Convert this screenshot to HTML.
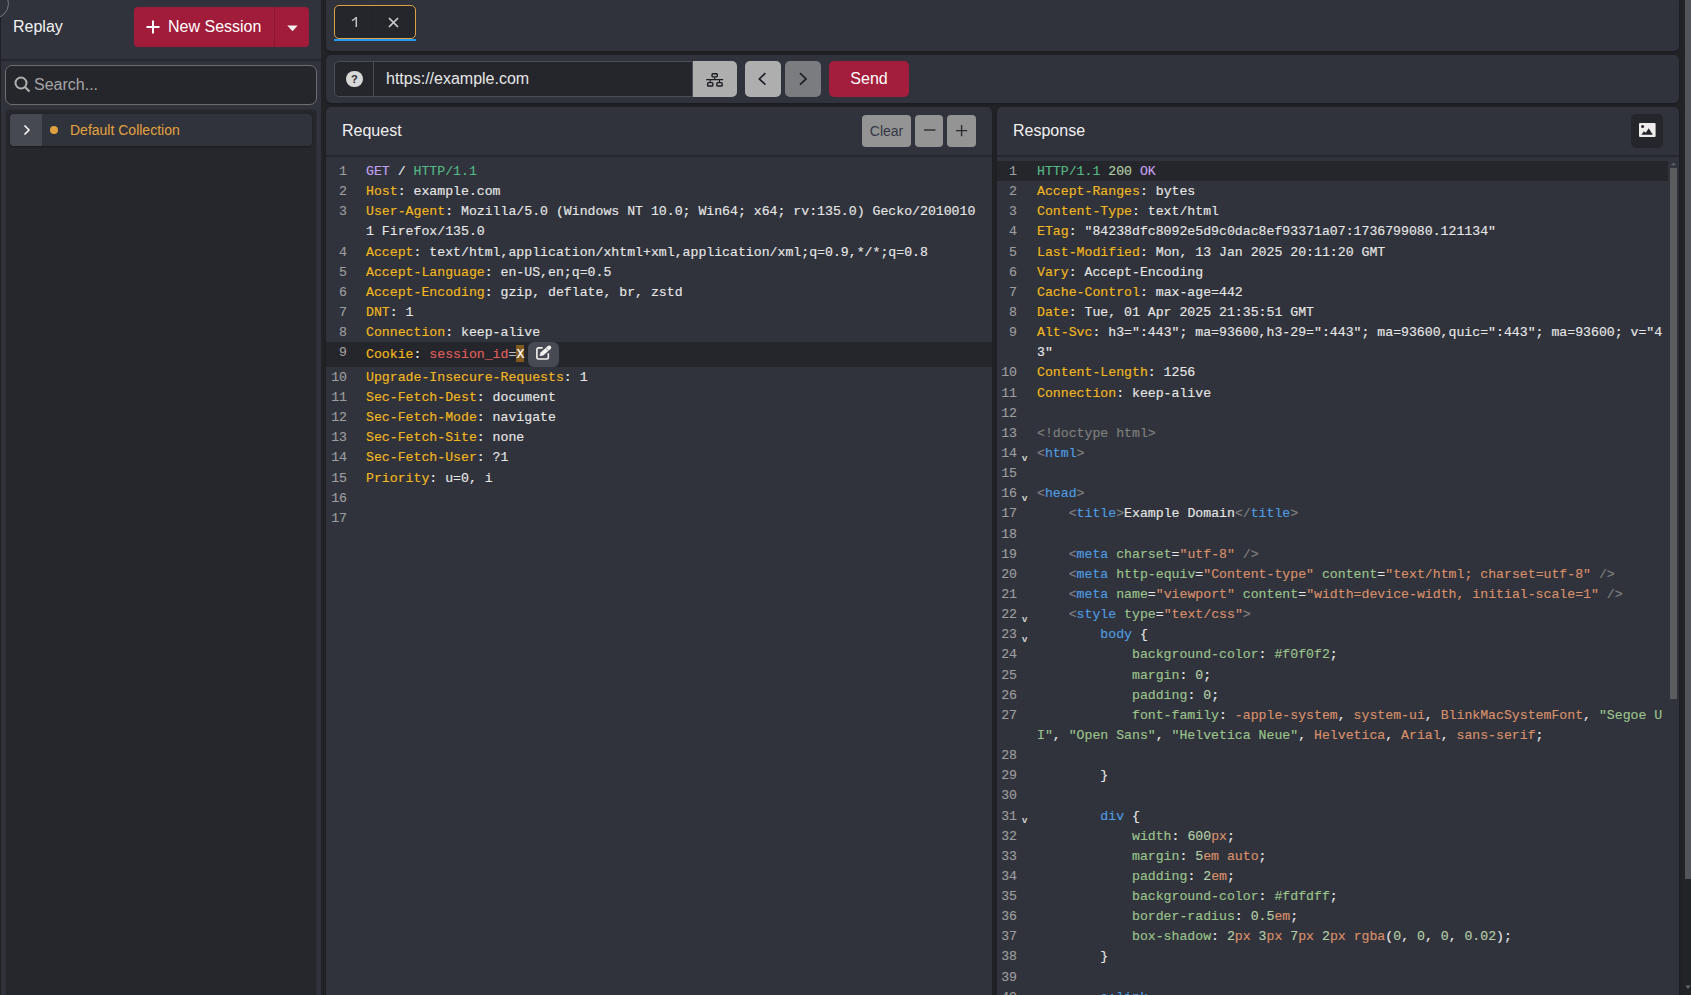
<!DOCTYPE html>
<html><head><meta charset="utf-8">
<style>
*{box-sizing:border-box;margin:0;padding:0}
html,body{width:1691px;height:995px;overflow:hidden;background:#222327;font-family:"Liberation Sans",sans-serif;color:#e6e6e6}
.abs{position:absolute}
#side{position:absolute;left:0;top:0;width:321px;height:995px;background:#30333c}
#side .strip{position:absolute;left:0;top:17px;width:1px;bottom:0;background:#1f2024}
#side .arc{position:absolute;left:-22px;top:-12px;width:31px;height:31px;border-radius:50%;border:1px solid #7a7b80}
#side .hsep{position:absolute;left:1px;top:59px;width:320px;height:2px;background:#26282d}
.title{position:absolute;left:13px;top:18px;font-size:16px;color:#f2f2f2}
#newbtn{position:absolute;left:134px;top:7px;width:175px;height:40px;background:#a11c3b;border-radius:4px}
#newbtn .div{position:absolute;left:140px;top:0;width:1px;height:40px;background:#8a1631}
#newbtn .txt{position:absolute;left:34px;top:11px;font-size:16px;color:#fff}
#search{position:absolute;left:5px;top:65px;width:312px;height:40px;border:1px solid #6e6e70;border-radius:7px;background:#25262b}
#search .ph{position:absolute;left:28px;top:10px;font-size:16px;color:#a5a5a8}
#coll{position:absolute;left:5px;top:109px;width:312px;height:890px;background:#26272c;border-radius:4px;border:1px solid #2c2e34}
#row{position:absolute;left:10px;top:114px;width:302px;height:32px;background:#30333c;border-radius:4px;box-shadow:0 1px 2px rgba(0,0,0,.35);overflow:hidden}
#row .chev{position:absolute;left:0;top:0;width:32px;height:32px;background:#464952}
#row .dot{position:absolute;left:40px;top:12px;width:8px;height:8px;border-radius:50%;background:#e0a040}
#row .name{position:absolute;left:60px;top:8px;font-size:14px;color:#e4a33f}

.panel{position:absolute;background:#30333c;border-radius:5px;box-shadow:0 1px 3px rgba(0,0,0,.3)}
#tabs{left:326px;top:0;width:1353px;height:51px;border-radius:0 0 5px 5px}
#tab1{position:absolute;left:8px;top:5px;width:82px;height:34px;border:1px solid #dca244;border-radius:5px;background:#25262b}
#tab1 .n{position:absolute;left:16px;top:8px;font-size:14px;color:#b8b8b8}
#tab1 .sep{position:absolute;left:40px;top:0;width:1px;height:32px;background:#27282d}
#tabul{position:absolute;left:8px;top:39px;width:82px;height:2px;background:#2299f2}
#urlbar{left:326px;top:55px;width:1353px;height:48px}
#urlin{position:absolute;left:8px;top:6px;width:359px;height:36px;border:1px solid #4b4e56;border-radius:5px 0 0 5px;background:#25262b}
#urlin .q{position:absolute;left:11.2px;top:8.8px;width:16.5px;height:16.5px;border-radius:50%;background:#d8d8d8;color:#2a2b30;font-size:11px;font-weight:bold;text-align:center;line-height:17px}
#urlin .sep{position:absolute;left:38px;top:0;width:1px;height:34px;background:#4b4e56}
#urlin .u{position:absolute;left:51px;top:8px;font-size:16px;color:#e8e8e8}
.gbtn{position:absolute;top:6px;height:36px;background:#aeaeae;border-radius:5px}
#send{position:absolute;left:503px;top:6px;width:80px;height:36px;background:#a31d3c;border-radius:5px;color:#fff;font-size:16px;text-align:center;line-height:36px}

#req{left:326px;top:107px;width:666px;height:900px}
#res{left:997px;top:107px;width:682px;height:900px}
.ph{position:absolute;left:0;top:0;width:100%;height:48px}
.ph .t{position:absolute;left:16px;top:15px;font-size:16px;color:#f0f0f0}
.psep{position:absolute;left:0;top:48px;width:100%;height:2px;background:#26282d}
.sbtn{position:absolute;top:8px;height:32px;background:#949494;border-radius:4px;color:#353845;font-size:14px;text-align:center;line-height:33px}

.code{position:absolute;left:0;top:54px;width:100%;font-family:"Liberation Mono",monospace;font-size:13.2px;-webkit-text-stroke:0.15px currentColor}
.r .c{white-space:pre}
.r.ck{height:24.6px}
.r.ck .c{top:2.6px}
.edit{position:absolute;left:202px;top:0;width:30.5px;height:24.6px;background:#474a53;border-radius:6px}
.edit svg{position:absolute;left:7px;top:2px}
.eq{color:#bdbdbd}
.xv{color:#fff;background:#7f5a1c;padding:2px 0 0.5px}
.r{position:relative;height:20.15px;line-height:20.15px}
.r .g{position:absolute;left:0;top:1px;width:21px;text-align:right;color:#9d9d9f}
.r .c{position:absolute;left:40px;top:1px;color:#e6e6e6}
.hl{background:#25262b}
#res .hl{width:671px}
#res .r .g{width:20px}
.k{color:#f4b81c}
.m{color:#c6a0f0}
.p{color:#55b985}
.s{color:#e05d5d}
.tb{color:#808080}
.tn{color:#4f9ce0}
.an{color:#9cc38c}
.sv{color:#d9906a}
.nu{color:#b5cea8}
.fold{position:absolute;left:25px;top:4.6px;font-family:"Liberation Sans",sans-serif;font-size:9.6px;font-weight:bold;color:#cfcfcf;-webkit-text-stroke:0}
#outsb{position:absolute;left:1685px;top:0;width:6px;height:879px;background:#535459}
</style></head>
<body>
<div id="side">
  <div class="arc"></div>
  <div class="strip"></div>
  <div class="title">Replay</div>
  <div id="newbtn">
    <svg class="abs" style="left:11px;top:11.5px" width="16" height="16" viewBox="0 0 16 16"><path d="M8 1.5v13M1.5 8h13" stroke="#fff" stroke-width="2"/></svg>
    <div class="txt">New Session</div>
    <div class="div"></div>
    <svg class="abs" style="left:153px;top:18px" width="11" height="7" viewBox="0 0 11 7"><path d="M0.3 0.5h10.4L5.5 6.3z" fill="#f0f0f0"/></svg>
  </div>
  <div class="hsep"></div>
  <div id="search">
    <svg class="abs" style="left:8px;top:10px" width="17" height="17" viewBox="0 0 17 17"><circle cx="7" cy="7" r="5.5" stroke="#b0b0b0" stroke-width="2" fill="none"/><path d="M11 11l4.5 4.5" stroke="#b0b0b0" stroke-width="2.2"/></svg>
    <div class="ph">Search...</div>
  </div>
  <div id="coll"></div>
  <div id="row">
    <div class="chev"><svg class="abs" style="left:13px;top:10px" width="8" height="12" viewBox="0 0 8 12"><path d="M1.5 1.5l4.5 4.5-4.5 4.5" stroke="#fff" stroke-width="1.5" fill="none"/></svg></div>
    <div class="dot"></div>
    <div class="name">Default Collection</div>
  </div>
</div>

<div id="tabs" class="panel">
  <div id="tab1"><svg class="abs" style="left:0;top:0" width="40" height="32"><path d="M21.3 11v10.1" stroke="#c4c4c4" stroke-width="1.5"/><path d="M21 11.4C20 13 18.6 14 16.9 14.6" stroke="#c4c4c4" stroke-width="1.2" fill="none"/></svg><div class="sep"></div>
    <svg class="abs" style="left:52.5px;top:10.5px" width="11" height="11" viewBox="0 0 11 11"><path d="M1 1l9 9M10 1l-9 9" stroke="#cfcfcf" stroke-width="1.7"/></svg>
  </div>
  <div id="tabul"></div>
</div>

<div id="urlbar" class="panel">
  <div id="urlin"><div class="q">?</div><div class="sep"></div><div class="u">https://example.com</div></div>
  <div class="gbtn" style="left:367px;width:44px;border-radius:0 5px 5px 0">
    <svg class="abs" style="left:13px;top:11px" width="18" height="16" viewBox="0 0 18 16"><rect x="6.05" y="1.75" width="5.2" height="3.1" rx="0.8" stroke="#1a1c22" stroke-width="1.4" fill="none"/><rect x="1.65" y="10.65" width="5.2" height="3.3" rx="0.8" stroke="#1a1c22" stroke-width="1.4" fill="none"/><rect x="10.85" y="10.65" width="5.3" height="3.3" rx="0.8" stroke="#1a1c22" stroke-width="1.4" fill="none"/><path d="M0.2 7.6h17M8.65 5.3v2.3M4.25 7.6v2.4M13.5 7.6v2.4" stroke="#1a1c22" stroke-width="1.1" fill="none"/></svg>
  </div>
  <div class="gbtn" style="left:419px;width:36px">
    <svg class="abs" style="left:0;top:0" width="36" height="36"><path d="M20.4 12.1L14.3 17.9 20.4 23.7" stroke="#1c1a24" stroke-width="1.6" fill="none"/></svg>
  </div>
  <div class="gbtn" style="left:459px;width:36px;background:#7b7c80">
    <svg class="abs" style="left:0;top:0" width="36" height="36"><path d="M15 12.1L21.1 17.9 15 23.7" stroke="#1c1a24" stroke-width="1.6" fill="none"/></svg>
  </div>
  <div id="send">Send</div>
</div>

<div id="req" class="panel">
  <div class="ph"><div class="t">Request</div>
    <div class="sbtn" style="left:536px;width:49px">Clear</div>
    <div class="sbtn" style="left:589px;width:28px"><svg class="abs" style="left:8.5px;top:14.4px" width="12" height="2"><path d="M0 1h11.5" stroke="#2a2b30" stroke-width="1.4"/></svg></div>
    <div class="sbtn" style="left:621px;width:29px"><svg class="abs" style="left:9px;top:10px" width="12" height="12"><path d="M0 5.6h11.2M5.6 0v11.2" stroke="#2a2b30" stroke-width="1.4"/></svg></div>
  </div>
  <div class="psep"></div>
  <div class="code" id="reqcode"><div class="r"><span class="g">1</span><span class="c"><span class="m">GET</span> / <span class="p">HTTP/1.1</span></span></div>
<div class="r"><span class="g">2</span><span class="c"><span class="k">Host</span>: example.com</span></div>
<div class="r"><span class="g">3</span><span class="c"><span class="k">User-Agent</span>: Mozilla/5.0 (Windows NT 10.0; Win64; x64; rv:135.0) Gecko/2010010</span></div>
<div class="r"><span class="g"></span><span class="c">1 Firefox/135.0</span></div>
<div class="r"><span class="g">4</span><span class="c"><span class="k">Accept</span>: text/html,application/xhtml+xml,application/xml;q=0.9,*/*;q=0.8</span></div>
<div class="r"><span class="g">5</span><span class="c"><span class="k">Accept-Language</span>: en-US,en;q=0.5</span></div>
<div class="r"><span class="g">6</span><span class="c"><span class="k">Accept-Encoding</span>: gzip, deflate, br, zstd</span></div>
<div class="r"><span class="g">7</span><span class="c"><span class="k">DNT</span>: 1</span></div>
<div class="r"><span class="g">8</span><span class="c"><span class="k">Connection</span>: keep-alive</span></div>
<div class="r hl ck"><span class="g">9</span><span class="c"><span class="k">Cookie</span>: <span class="s">session_id</span><span class="eq">=</span><span class="xv">X</span></span><div class="edit"><svg width="18" height="17" viewBox="0 0 18 17"><path d="M7.6 3.85H3.6a1.7 1.7 0 0 0-1.7 1.7v7.7a1.7 1.7 0 0 0 1.7 1.7h8.05a1.7 1.7 0 0 0 1.7-1.7V9.2" stroke="#f4f2f0" stroke-width="1.6" fill="none"/><path d="M4.5 12.1L8.22 11.49 15.57 5.02 12.93 2.02 5.58 8.49z" fill="#f4f2f0"/><circle cx="14.25" cy="3.52" r="2" fill="#f4f2f0"/><path d="M11.3 4.5l2.1 2.3" stroke="#474a53" stroke-width="0.6"/></svg></div></div>
<div class="r"><span class="g">10</span><span class="c"><span class="k">Upgrade-Insecure-Requests</span>: 1</span></div>
<div class="r"><span class="g">11</span><span class="c"><span class="k">Sec-Fetch-Dest</span>: document</span></div>
<div class="r"><span class="g">12</span><span class="c"><span class="k">Sec-Fetch-Mode</span>: navigate</span></div>
<div class="r"><span class="g">13</span><span class="c"><span class="k">Sec-Fetch-Site</span>: none</span></div>
<div class="r"><span class="g">14</span><span class="c"><span class="k">Sec-Fetch-User</span>: ?1</span></div>
<div class="r"><span class="g">15</span><span class="c"><span class="k">Priority</span>: u=0, i</span></div>
<div class="r"><span class="g">16</span><span class="c"></span></div>
<div class="r"><span class="g">17</span><span class="c"></span></div></div>
</div>

<div id="res" class="panel">
  <div class="ph"><div class="t">Response</div>
    <div class="abs" style="left:634px;top:7px;width:32px;height:34px;background:#25262b;border-radius:5px">
      <svg class="abs" style="left:7.8px;top:8.9px" width="17" height="15" viewBox="0 0 17 15"><rect x="0" y="0" width="16.6" height="14.1" rx="1" fill="#efedeb"/><circle cx="3.6" cy="3.4" r="1.5" fill="#25262b"/><path d="M2.4 11.7L4.9 8.3 6.8 9.8 9.7 5.2 13.8 11.7z" fill="#25262b"/></svg>
    </div>
  </div>
  <div class="psep"></div>
  <div class="code" id="rescode"><div class="r hl"><span class="g">1</span><span class="c"><span class="p">HTTP/1.1</span> <span class="nu">200</span> <span class="m">OK</span></span></div>
<div class="r"><span class="g">2</span><span class="c"><span class="k">Accept-Ranges</span>: bytes</span></div>
<div class="r"><span class="g">3</span><span class="c"><span class="k">Content-Type</span>: text/html</span></div>
<div class="r"><span class="g">4</span><span class="c"><span class="k">ETag</span>: "84238dfc8092e5d9c0dac8ef93371a07:1736799080.121134"</span></div>
<div class="r"><span class="g">5</span><span class="c"><span class="k">Last-Modified</span>: Mon, 13 Jan 2025 20:11:20 GMT</span></div>
<div class="r"><span class="g">6</span><span class="c"><span class="k">Vary</span>: Accept-Encoding</span></div>
<div class="r"><span class="g">7</span><span class="c"><span class="k">Cache-Control</span>: max-age=442</span></div>
<div class="r"><span class="g">8</span><span class="c"><span class="k">Date</span>: Tue, 01 Apr 2025 21:35:51 GMT</span></div>
<div class="r"><span class="g">9</span><span class="c"><span class="k">Alt-Svc</span>: h3=":443"; ma=93600,h3-29=":443"; ma=93600,quic=":443"; ma=93600; v="4</span></div>
<div class="r"><span class="g"></span><span class="c">3"</span></div>
<div class="r"><span class="g">10</span><span class="c"><span class="k">Content-Length</span>: 1256</span></div>
<div class="r"><span class="g">11</span><span class="c"><span class="k">Connection</span>: keep-alive</span></div>
<div class="r"><span class="g">12</span><span class="c"></span></div>
<div class="r"><span class="g">13</span><span class="c"><span class="tb">&lt;!doctype html&gt;</span></span></div>
<div class="r"><span class="g">14</span><span class="fold">v</span><span class="c"><span class="tb">&lt;</span><span class="tn">html</span><span class="tb">&gt;</span></span></div>
<div class="r"><span class="g">15</span><span class="c"></span></div>
<div class="r"><span class="g">16</span><span class="fold">v</span><span class="c"><span class="tb">&lt;</span><span class="tn">head</span><span class="tb">&gt;</span></span></div>
<div class="r"><span class="g">17</span><span class="c">    <span class="tb">&lt;</span><span class="tn">title</span><span class="tb">&gt;</span>Example Domain<span class="tb">&lt;/</span><span class="tn">title</span><span class="tb">&gt;</span></span></div>
<div class="r"><span class="g">18</span><span class="c"></span></div>
<div class="r"><span class="g">19</span><span class="c">    <span class="tb">&lt;</span><span class="tn">meta</span> <span class="an">charset</span>=<span class="sv">"utf-8"</span><span class="tb"> /&gt;</span></span></div>
<div class="r"><span class="g">20</span><span class="c">    <span class="tb">&lt;</span><span class="tn">meta</span> <span class="an">http-equiv</span>=<span class="sv">"Content-type"</span> <span class="an">content</span>=<span class="sv">"text/html; charset=utf-8"</span><span class="tb"> /&gt;</span></span></div>
<div class="r"><span class="g">21</span><span class="c">    <span class="tb">&lt;</span><span class="tn">meta</span> <span class="an">name</span>=<span class="sv">"viewport"</span> <span class="an">content</span>=<span class="sv">"width=device-width, initial-scale=1"</span><span class="tb"> /&gt;</span></span></div>
<div class="r"><span class="g">22</span><span class="fold">v</span><span class="c">    <span class="tb">&lt;</span><span class="tn">style</span> <span class="an">type</span>=<span class="sv">"text/css"</span><span class="tb">&gt;</span></span></div>
<div class="r"><span class="g">23</span><span class="fold">v</span><span class="c">        <span class="tn">body</span> {</span></div>
<div class="r"><span class="g">24</span><span class="c">            <span class="an">background-color</span>: <span class="an">#f0f0f2</span>;</span></div>
<div class="r"><span class="g">25</span><span class="c">            <span class="an">margin</span>: <span class="nu">0</span>;</span></div>
<div class="r"><span class="g">26</span><span class="c">            <span class="an">padding</span>: <span class="nu">0</span>;</span></div>
<div class="r"><span class="g">27</span><span class="c">            <span class="an">font-family</span>: <span class="sv">-apple-system</span>, <span class="sv">system-ui</span>, <span class="sv">BlinkMacSystemFont</span>, <span class="an">"Segoe U</span></span></div>
<div class="r"><span class="g"></span><span class="c"><span class="an">I"</span>, <span class="an">"Open Sans"</span>, <span class="an">"Helvetica Neue"</span>, <span class="sv">Helvetica</span>, <span class="sv">Arial</span>, <span class="sv">sans-serif</span>;</span></div>
<div class="r"><span class="g">28</span><span class="c"></span></div>
<div class="r"><span class="g">29</span><span class="c">        }</span></div>
<div class="r"><span class="g">30</span><span class="c"></span></div>
<div class="r"><span class="g">31</span><span class="fold">v</span><span class="c">        <span class="tn">div</span> {</span></div>
<div class="r"><span class="g">32</span><span class="c">            <span class="an">width</span>: <span class="nu">600</span><span class="sv">px</span>;</span></div>
<div class="r"><span class="g">33</span><span class="c">            <span class="an">margin</span>: <span class="nu">5</span><span class="sv">em</span> <span class="sv">auto</span>;</span></div>
<div class="r"><span class="g">34</span><span class="c">            <span class="an">padding</span>: <span class="nu">2</span><span class="sv">em</span>;</span></div>
<div class="r"><span class="g">35</span><span class="c">            <span class="an">background-color</span>: <span class="an">#fdfdff</span>;</span></div>
<div class="r"><span class="g">36</span><span class="c">            <span class="an">border-radius</span>: <span class="nu">0.5</span><span class="sv">em</span>;</span></div>
<div class="r"><span class="g">37</span><span class="c">            <span class="an">box-shadow</span>: <span class="nu">2</span><span class="sv">px</span> <span class="nu">3</span><span class="sv">px</span> <span class="nu">7</span><span class="sv">px</span> <span class="nu">2</span><span class="sv">px</span> <span class="sv">rgba</span>(<span class="nu">0</span>, <span class="nu">0</span>, <span class="nu">0</span>, <span class="nu">0.02</span>);</span></div>
<div class="r"><span class="g">38</span><span class="c">        }</span></div>
<div class="r"><span class="g">39</span><span class="c"></span></div>
<div class="r"><span class="g">40</span><span class="c">        <span class="tn">a:link</span>,</span></div></div>
  <div class="abs" style="left:673px;top:61px;width:7px;height:531px;background:#5b5c60"></div><svg class="abs" style="left:673px;top:54px" width="7" height="5"><path d="M0.8 4.3L3.5 1.5 6.2 4.3z" fill="#5f6065"/></svg>
</div>
<div id="outsb"></div><svg class="abs" style="left:1685px;top:985px" width="6" height="5"><path d="M0.5 0.5L3 4 5.5 0.5z" fill="#6a6b70"/></svg>
</body></html>
